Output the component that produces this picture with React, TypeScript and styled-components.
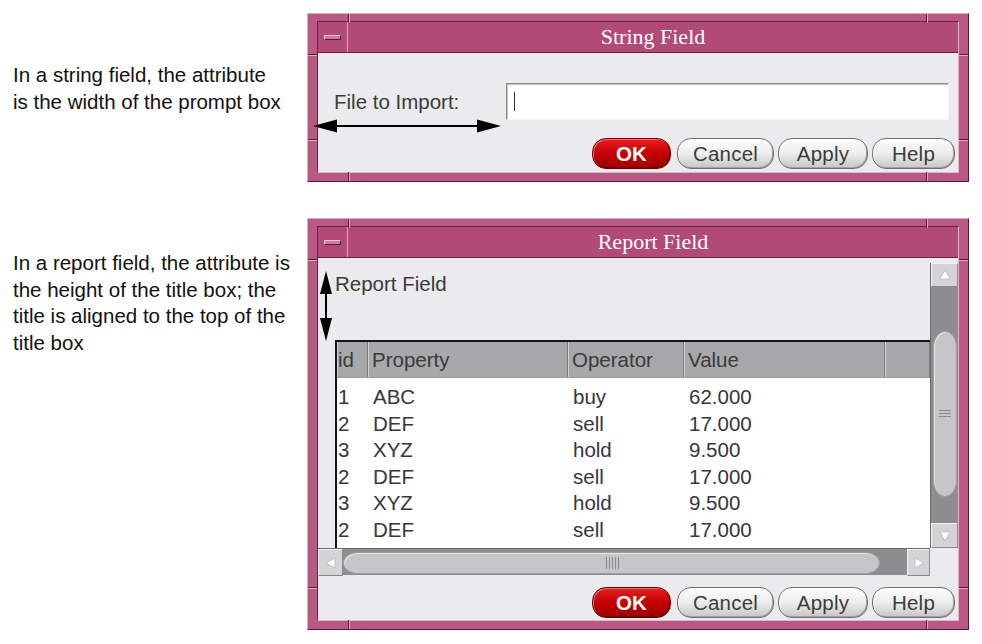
import React from 'react'
import styled, { createGlobalStyle, css } from 'styled-components'

const GlobalStyle = createGlobalStyle`
  html, body {
    margin: 0;
    padding: 0;
    background: #ffffff;
  }
  body {
    font-family: "Liberation Sans", Arial, sans-serif;
  }
`

const Page = styled.div`
  width: 982px;
  height: 644px;
  box-sizing: border-box;
  padding-top: 13px;
  display: flex;
  flex-direction: column;
  gap: 36px;
  overflow: hidden;
`

const Section = styled.div`
  display: flex;
  align-items: flex-start;
`

const Note = styled.p<{ $top: number }>`
  margin: ${(p) => p.$top}px 0 0;
  width: 307px;
  flex: none;
  box-sizing: border-box;
  padding-left: 13px;
  font-size: 20.5px;
  line-height: 26.5px;
  color: #111111;
  white-space: nowrap;
`

// --- window frame (Motif style) ---

const Window = styled.div`
  position: relative;
  width: 662px;
  box-sizing: border-box;
  background: #b85983;
  border: 1px solid;
  border-color: #e2a9c2 #5a1a37 #5a1a37 #e2a9c2;
  padding: 7px 9px 8px 9px;
`

const Frame = styled.div`
  border: 1px solid;
  border-color: #6a2345 #e6b2c8 #e6b2c8 #6a2345;
  display: flex;
  flex-direction: column;
`

const Notch = styled.span<{ $side: 'top' | 'bottom' | 'left' | 'right'; $at: string }>`
  position: absolute;
  ${(p) =>
    p.$side === 'top' || p.$side === 'bottom'
      ? css`
          ${p.$side}: 0;
          left: ${p.$at};
          width: 1px;
          height: 9px;
          background: #5a1a37;
          box-shadow: 1px 0 0 #e2a9c2;
        `
      : css`
          ${p.$side}: 0;
          top: ${p.$at};
          width: 9px;
          height: 1px;
          background: #5a1a37;
          box-shadow: 0 1px 0 #e2a9c2;
        `}
`

const TitleBar = styled.div`
  height: 31px;
  box-sizing: border-box;
  display: flex;
  background: #b14a77;
  border-bottom: 1px solid #6a2345;
`

const MenuBox = styled.div`
  width: 30px;
  flex: none;
  box-sizing: border-box;
  border-right: 1px solid #e0a4bd;
  display: flex;
  align-items: center;
  justify-content: center;
`

const MenuGlyph = styled.span`
  width: 17px;
  height: 5px;
  box-sizing: border-box;
  background: #cd7a9e;
  border: 1px solid;
  border-color: #f0c4d6 #5a1a37 #5a1a37 #f0c4d6;
`

const Title = styled.div`
  flex: 1;
  text-align: center;
  font-family: "Liberation Serif", "Times New Roman", serif;
  font-size: 22px;
  line-height: 30px;
  color: #ffffff;
`

const Content = styled.div<{ $pad: string }>`
  background: #ebeaec;
  padding: ${(p) => p.$pad};
  display: flex;
  flex-direction: column;
`

// --- string field ---

const FieldRow = styled.div`
  display: flex;
  align-items: center;
  padding: 0 9px 0 16px;
`

const FieldLabel = styled.span`
  width: 172px;
  flex: none;
  font-size: 20.5px;
  color: #3a3a3a;
`

const TextBox = styled.div`
  flex: 1;
  height: 37px;
  box-sizing: border-box;
  background: #ffffff;
  border: 1px solid;
  border-color: #8a8a8a #f6f6f6 #f6f6f6 #8a8a8a;
  box-shadow: inset 1px 1px 0 #c4c4c4;
  display: flex;
  align-items: center;
  padding-left: 7px;
`

const Caret = styled.span`
  width: 1px;
  height: 19px;
  background: #333333;
`

// --- buttons ---

const ButtonRow = styled.div<{ $mt: number }>`
  display: flex;
  justify-content: flex-end;
  gap: 4px;
  margin-top: ${(p) => p.$mt}px;
  padding-right: 3px;
`

const Button = styled.button<{ $w: number; $primary?: boolean }>`
  width: ${(p) => p.$w}px;
  height: 31px;
  padding: 0;
  border-radius: 14px;
  border: 1px solid #6e6e6e;
  background: linear-gradient(#fcfcfc 0%, #ededed 50%, #c6c6c6 100%);
  box-shadow: inset 1px 1px 0 #ffffff, inset -1px -1px 0 #a2a2a2;
  font-family: "Liberation Sans", Arial, sans-serif;
  font-size: 20.5px;
  letter-spacing: 0.2px;
  color: #3c3c3c;
  ${(p) =>
    p.$primary &&
    css`
      margin-right: 2px;
      border-color: #6a0000;
      background: linear-gradient(#e42222 0%, #c60000 50%, #9c0000 100%);
      box-shadow: inset 1px 1px 0 #f07070, inset -1px -1px 0 #700000;
      color: #ffffff;
      font-weight: bold;
    `}
`

// --- report field ---

const ReportGrid = styled.div`
  display: grid;
  grid-template-columns: 1fr 28px;
  grid-template-rows: 285px 27px;
`

const ReportMain = styled.div`
  display: flex;
  flex-direction: column;
  padding-left: 17px;
  min-width: 0;
`

const ReportTitle = styled.div`
  height: 77px;
  box-sizing: border-box;
  padding-top: 9px;
  font-size: 20.5px;
  line-height: 24px;
  color: #3a3a3a;
`

const cols = '31px 200px 116px 201px 1fr'

const Table = styled.div`
  flex: 1;
  display: flex;
  flex-direction: column;
  min-height: 0;
  border-left: 2px solid #141414;
  border-top: 2px solid #141414;
  background: #ffffff;
  overflow: hidden;
`

const HeadRow = styled.div`
  display: grid;
  grid-template-columns: ${cols};
  height: 36px;
  flex: none;
  background: #a8a8aa;
  border-bottom: 1px solid #9a9a9a;
  box-sizing: border-box;
`

const HeadCell = styled.div<{ $pad?: number }>`
  box-sizing: border-box;
  padding-left: ${(p) => p.$pad ?? 4}px;
  border-right: 1px solid #7a7a7a;
  box-shadow: inset 1px 0 0 #d2d2d2;
  font-size: 20.5px;
  line-height: 35px;
  color: #3a3a3a;
  white-space: nowrap;
  overflow: hidden;
`

const Body = styled.div`
  flex: 1;
  min-height: 0;
  padding-top: 6px;
  overflow: hidden;
`

const Row = styled.div`
  display: grid;
  grid-template-columns: ${cols};
  height: 26.5px;
  line-height: 26.5px;
`

const Cell = styled.div<{ $pad?: number }>`
  padding-left: ${(p) => p.$pad ?? 5}px;
  font-size: 20.5px;
  color: #363640;
  white-space: nowrap;
`

const VScroll = styled.div`
  grid-row: 1;
  grid-column: 2;
  display: flex;
  flex-direction: column;
  background: #8d8d8f;
  border-left: 1px solid #6c6c6c;
`

const ArrowBox = styled.div<{ $h: number; $w?: number }>`
  flex: none;
  height: ${(p) => p.$h}px;
  width: ${(p) => (p.$w ? `${p.$w}px` : 'auto')};
  background: #d4d4d6;
  border: 1px solid;
  border-color: #f4f4f4 #8a8a8a #8a8a8a #f4f4f4;
  box-sizing: border-box;
  display: flex;
  align-items: center;
  justify-content: center;
`

const VTrack = styled.div`
  flex: 1;
  padding: 44px 1px 0 2px;
`

const VThumb = styled.div`
  height: 166px;
  box-sizing: border-box;
  border-radius: 12px / 16px;
  background: #c6c6c8;
  border: 1px solid #9c9c9c;
  box-shadow: inset 1px 1px 0 #e6e6e6;
  display: flex;
  align-items: center;
  justify-content: center;
`

const HScroll = styled.div`
  grid-row: 2;
  grid-column: 1;
  display: flex;
  background: #8d8d8f;
  border-top: 1px solid #6c6c6c;
`

const HTrack = styled.div`
  flex: 1;
  padding: 3px 27px 1px 0;
`

const HThumb = styled.div`
  height: 100%;
  box-sizing: border-box;
  border-radius: 16px / 12px;
  background: #c6c6c8;
  border: 1px solid #9c9c9c;
  box-shadow: inset 1px 1px 0 #e6e6e6;
  display: flex;
  align-items: center;
  justify-content: center;
`

const Corner = styled.div`
  grid-row: 2;
  grid-column: 2;
  background: #ebeaec;
`

const Overlay = styled.svg<{ $left: number; $top: number }>`
  position: absolute;
  left: ${(p) => p.$left}px;
  top: ${(p) => p.$top}px;
  overflow: visible;
`

const Tri = ({ dir }: { dir: 'up' | 'down' | 'left' | 'right' }) => {
  const pts = {
    up: '6,1 11,10 1,10',
    down: '1,2 11,2 6,11',
    left: '1,6 10,1 10,11',
    right: '2,1 11,6 2,11',
  }[dir]
  return (
    <svg width="12" height="12" viewBox="0 0 12 12">
      <polygon points={pts} fill="#ffffff" stroke="#b8b8b8" strokeWidth="0.8" />
    </svg>
  )
}

const Grip = ({ vertical }: { vertical?: boolean }) =>
  vertical ? (
    <svg width="12" height="10" viewBox="0 0 12 10">
      {[1, 4, 7].map((y) => (
        <line key={y} x1="0" y1={y + 0.5} x2="12" y2={y + 0.5} stroke="#8a8a8a" strokeWidth="1" />
      ))}
    </svg>
  ) : (
    <svg width="14" height="12" viewBox="0 0 14 12">
      {[1, 4, 7, 10, 13].map((x) => (
        <line key={x} x1={x + 0.5} y1="0" x2={x + 0.5} y2="12" stroke="#8a8a8a" strokeWidth="1" />
      ))}
    </svg>
  )

const Notches = () => (
  <>
    <Notch $side="top" $at="40px" />
    <Notch $side="top" $at="calc(100% - 42px)" />
    <Notch $side="bottom" $at="40px" />
    <Notch $side="bottom" $at="calc(100% - 42px)" />
    <Notch $side="left" $at="40px" />
    <Notch $side="left" $at="calc(100% - 42px)" />
    <Notch $side="right" $at="40px" />
    <Notch $side="right" $at="calc(100% - 42px)" />
  </>
)

const WindowTitle = ({ text }: { text: string }) => (
  <TitleBar>
    <MenuBox>
      <MenuGlyph />
    </MenuBox>
    <Title>{text}</Title>
  </TitleBar>
)

const Buttons = ({ mt }: { mt: number }) => (
  <ButtonRow $mt={mt}>
    <Button $w={79} $primary>
      OK
    </Button>
    <Button $w={97}>Cancel</Button>
    <Button $w={90}>Apply</Button>
    <Button $w={83}>Help</Button>
  </ButtonRow>
)

const rows = [
  ['1', 'ABC', 'buy', '62.000'],
  ['2', 'DEF', 'sell', '17.000'],
  ['3', 'XYZ', 'hold', '9.500'],
  ['2', 'DEF', 'sell', '17.000'],
  ['3', 'XYZ', 'hold', '9.500'],
  ['2', 'DEF', 'sell', '17.000'],
  ['3', 'XYZ', 'hold', '9.500'],
]

const App: React.FC = () => {
  return (
    <>
      <GlobalStyle />
      <Page>
        <Section>
          <Note $top={49}>
            In a string field, the attribute
            <br />
            is the width of the prompt box
          </Note>
          <Window>
            <Notches />
            <Frame>
              <WindowTitle text="String Field" />
              <Content $pad="30px 0 3px 0">
                <FieldRow>
                  <FieldLabel>File to Import:</FieldLabel>
                  <TextBox>
                    <Caret />
                  </TextBox>
                </FieldRow>
                <Buttons mt={18} />
              </Content>
            </Frame>
            {/* width of the prompt box */}
            <Overlay $left={5} $top={105} width="188" height="14" viewBox="0 0 188 14">
              <line x1="20" y1="7" x2="168" y2="7" stroke="#000" strokeWidth="2" />
              <polygon points="0,7 24,0.5 24,13.5" fill="#000" />
              <polygon points="188,7 164,0.5 164,13.5" fill="#000" />
            </Overlay>
          </Window>
        </Section>

        <Section>
          <Note $top={32}>
            In a report field, the attribute is
            <br />
            the height of the title box; the
            <br />
            title is aligned to the top of the
            <br />
            title box
          </Note>
          <Window>
            <Notches />
            <Frame>
              <WindowTitle text="Report Field" />
              <Content $pad="5px 0 2px 0">
                <ReportGrid>
                  <ReportMain>
                    <ReportTitle>Report Field</ReportTitle>
                    <Table>
                      <HeadRow>
                        <HeadCell $pad={1}>id</HeadCell>
                        <HeadCell>Property</HeadCell>
                        <HeadCell>Operator</HeadCell>
                        <HeadCell>Value</HeadCell>
                        <HeadCell />
                      </HeadRow>
                      <Body>
                        {rows.map((r, i) => (
                          <Row key={i}>
                            <Cell $pad={1}>{r[0]}</Cell>
                            <Cell>{r[1]}</Cell>
                            <Cell>{r[2]}</Cell>
                            <Cell>{r[3]}</Cell>
                            <Cell />
                          </Row>
                        ))}
                      </Body>
                    </Table>
                  </ReportMain>
                  <VScroll>
                    <ArrowBox $h={24}>
                      <Tri dir="up" />
                    </ArrowBox>
                    <VTrack>
                      <VThumb>
                        <Grip vertical />
                      </VThumb>
                    </VTrack>
                    <ArrowBox $h={25}>
                      <Tri dir="down" />
                    </ArrowBox>
                  </VScroll>
                  <HScroll>
                    <ArrowBox $h={27} $w={25}>
                      <Tri dir="left" />
                    </ArrowBox>
                    <HTrack>
                      <HThumb>
                        <Grip />
                      </HThumb>
                    </HTrack>
                    <ArrowBox $h={27} $w={23}>
                      <Tri dir="right" />
                    </ArrowBox>
                  </HScroll>
                  <Corner />
                </ReportGrid>
                <Buttons mt={12} />
              </Content>
            </Frame>
            {/* height of the title box */}
            <Overlay $left={11} $top={52} width="14" height="70" viewBox="0 0 14 70">
              <line x1="7" y1="18" x2="7" y2="52" stroke="#000" strokeWidth="2" />
              <polygon points="7,0 1,23 13,23" fill="#000" />
              <polygon points="7,70 1,47 13,47" fill="#000" />
            </Overlay>
          </Window>
        </Section>
      </Page>
    </>
  )
}

export default App
